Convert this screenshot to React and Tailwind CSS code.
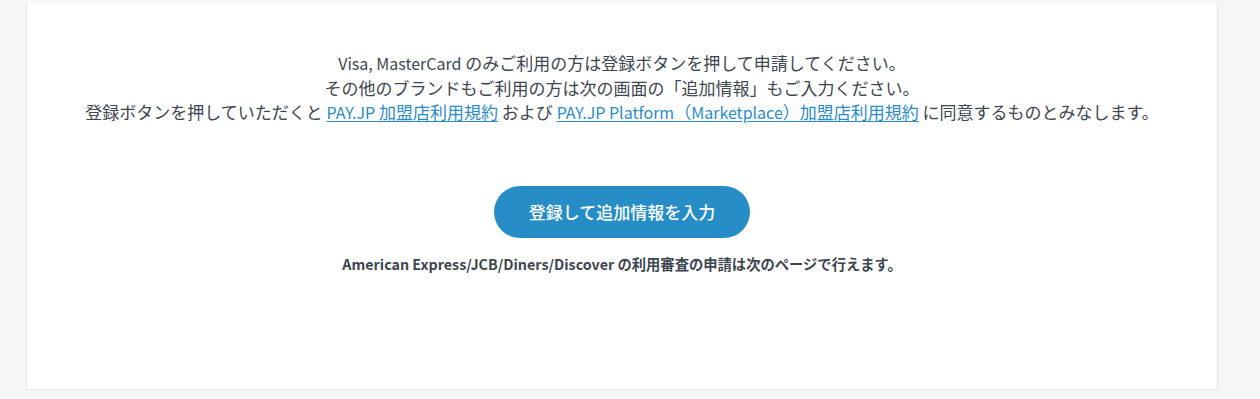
import React from 'react';

const font = { fontFamily: '"Noto Sans CJK JP", "Noto Sans", sans-serif' };

// latin runs sit a touch smaller than the kana/kanji around them
const L = ({ children }) => <span className="text-[16px]">{children}</span>;

const TermsLink = ({ children }) => (
    <a href="#" className="text-[#2a8bc9] underline underline-offset-2">{children}</a>
);

const App = () => {
    return (
        <div className="min-h-[399px] bg-[#f5f7f7] pl-[26px] pt-[3px]" style={font}>
            <div className="w-[1192px] h-[387px] bg-white border border-t-0 border-[#e4e6ec] flex flex-col items-center pt-[48px]">
                <div className="text-center text-[17px] leading-[24.5px] text-[#3e4650]">
                    <p><L>Visa, MasterCard</L> のみご利用の方は登録ボタンを押して申請してください。</p>
                    <p>その他のブランドもご利用の方は次の画面の「追加情報」もご入力ください。</p>
                    <p>
                        登録ボタンを押していただくと <TermsLink><L>PAY.JP</L> 加盟店利用規約</TermsLink> および{' '}
                        <TermsLink><L>PAY.JP Platform</L>（<L>Marketplace</L>）加盟店利用規約</TermsLink> に同意するものとみなします。
                    </p>
                </div>
                <button className="mt-[61px] w-[256px] h-[52px] rounded-full bg-[#268dc7] text-white text-[17px] font-medium">
                    登録して追加情報を入力
                </button>
                <p className="mt-[15px] text-[14.3px] font-bold text-[#3e4650]">
                    American Express/JCB/Diners/Discover の利用審査の申請は次のページで行えます。
                </p>
            </div>
        </div>
    );
};

export default App;
